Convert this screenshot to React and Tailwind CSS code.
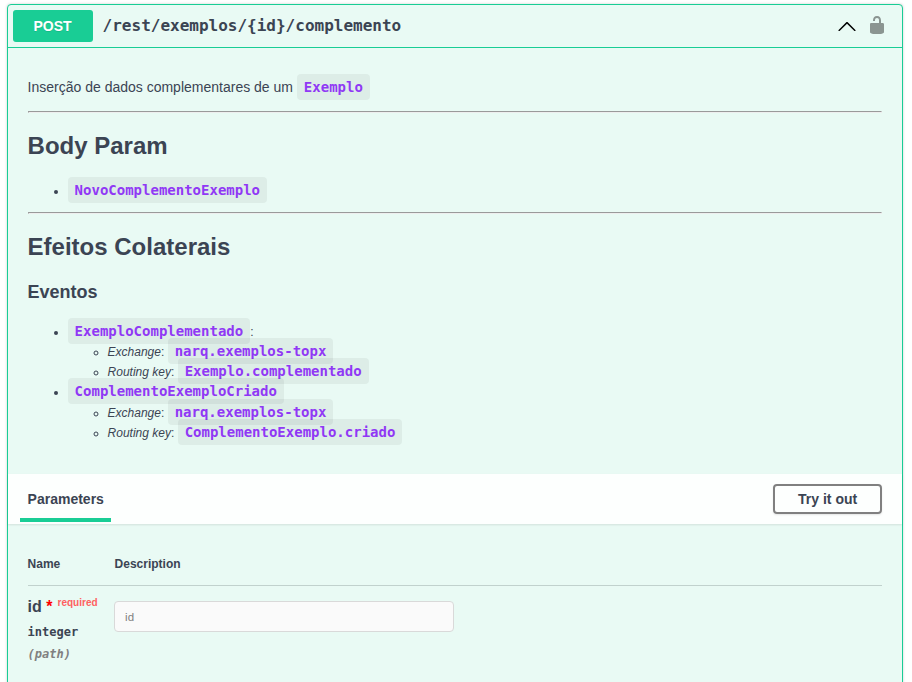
import React from "react";

const Code = ({ children }) => (
  <code className="rounded bg-black/5 px-[7px] py-[5px] font-['DejaVu_Sans_Mono',monospace] text-[14px] leading-none font-bold text-[#9038f5]">
    {children}
  </code>
);

const Rule = () => (
  <hr className="h-[2px] border border-t-[#9a9a9a] border-r-[#eee] border-b-[#eee] border-l-[#9a9a9a]" />
);

const Binding = ({ label, value }) => (
  <li>
    <div className="h-5 whitespace-nowrap">
      <em>{label}</em>: <Code>{value}</Code>
    </div>
  </li>
);

function Summary() {
  return (
    <div className="flex h-[43px] items-center border-b border-[#19cd95] px-[5px]">
      <button className="h-8 w-20 rounded-[3px] bg-[#19cd95] text-[14px] font-bold text-white [text-shadow:0_1px_0_rgba(0,0,0,0.1)]">
        POST
      </button>
      <span className="flex-1 pl-[10px] font-['DejaVu_Sans_Mono',monospace] text-[16px] font-semibold">
        /rest/exemplos/&#123;id&#125;/complemento
      </span>
      <svg width="20" height="20" viewBox="0 0 20 20" className="mr-[10px]">
        <path
          fill="#000"
          d="M 17.418 14.908 C 17.69 15.176 18.127 15.176 18.397 14.908 C 18.667 14.64 18.668 14.207 18.397 13.939 L 10.489 6.109 C 10.219 5.841 9.782 5.841 9.51 6.109 L 1.602 13.939 C 1.332 14.207 1.332 14.64 1.602 14.908 C 1.873 15.176 2.311 15.176 2.581 14.908 L 10 7.767 L 17.418 14.908 Z"
        />
      </svg>
      <svg width="20" height="20" viewBox="0 0 20 20" className="mr-[10px] mb-[2px] opacity-40">
        <path
          fill="#000"
          d="M15.8 8H14V5.6C14 2.703 12.665 1 10 1 7.334 1 6 2.703 6 5.6V6h2v-.801C8 3.754 8.797 3 10 3c1.203 0 2 .754 2 2.199V8H4c-.553 0-1 .646-1 1.199V17c0 .549.428 1.139.951 1.307l1.197.387C5.672 18.861 6.55 19 7.1 19h5.8c.549 0 1.428-.139 1.951-.307l1.196-.387c.524-.167.953-.757.953-1.306V9.199C17 8.646 16.352 8 15.8 8z"
        />
      </svg>
    </div>
  );
}

function Description() {
  return (
    <div className="h-[426px] px-5 pt-[29px]">
      <p className="h-[34px] text-[14px] leading-5">
        Inserção de dados complementares de um <Code>Exemplo</Code>
      </p>
      <Rule />
      <h1 className="mt-[17px] text-[24px] leading-8 font-bold">Body Param</h1>
      <ul className="mt-[19px] h-[31px] list-disc pl-10 text-[12px] leading-5">
        <li>
          <div className="h-5">
            <Code>NovoComplementoExemplo</Code>
          </div>
        </li>
      </ul>
      <Rule />
      <h1 className="mt-[17px] text-[24px] leading-8 font-bold">Efeitos Colaterais</h1>
      <h2 className="mt-[17px] text-[18px] leading-6 font-bold">Eventos</h2>
      <ul className="mt-[18px] list-disc pl-10 text-[12px] leading-5">
        <li>
          <div className="h-5">
            <Code>ExemploComplementado</Code>:
          </div>
          <ul className="list-[circle] pl-10">
            <Binding label="Exchange" value="narq.exemplos-topx" />
            <Binding label="Routing key" value="Exemplo.complementado" />
          </ul>
        </li>
        <li>
          <div className="h-[21px]">
            <Code>ComplementoExemploCriado</Code>
          </div>
          <ul className="list-[circle] pl-10">
            <Binding label="Exchange" value="narq.exemplos-topx" />
            <Binding label="Routing key" value="ComplementoExemplo.criado" />
          </ul>
        </li>
      </ul>
    </div>
  );
}

function ParametersBar() {
  return (
    <div className="flex h-[50px] items-center justify-between bg-white/90 pr-5 pl-3 shadow-[0_1px_2px_rgba(0,0,0,0.1)]">
      <div className="flex h-full flex-col justify-between pb-[2px]">
        <h4 className="pr-[7.4px] pl-2 pt-[15px] text-[14px] leading-5 font-bold">Parameters</h4>
        <div className="h-1 bg-[#19cd95]" />
      </div>
      <button className="h-[30px] w-[109px] rounded border-2 border-[#808080] pl-px text-[14px] font-bold shadow-[0_1px_2px_rgba(0,0,0,0.1)]">
        Try it out
      </button>
    </div>
  );
}

function ParametersTable() {
  return (
    <div className="px-5 pt-[20px]">
      <div className="flex h-[42px] border-b border-[#c1d1cd] pt-[10px] text-[12px] leading-5 font-bold">
        <div className="w-[87px]">Name</div>
        <div>Description</div>
      </div>
      <div className="flex pt-[10px]">
        <div className="w-[86px] shrink-0 whitespace-nowrap">
          <div className="flex h-[25px] text-[16px] leading-[22px] font-bold">
            <span>id</span>
            <span className="ml-[4.5px] text-[#ff0000]">*</span>
            <span className="ml-[5px] text-[10px] leading-[14px] text-[#ff6060]">required</span>
          </div>
          <div className="h-[22px] font-['DejaVu_Sans_Mono',monospace] text-[12px] leading-[22px] font-bold">
            integer
          </div>
          <div className="h-[22px] font-['DejaVu_Sans_Mono',monospace] text-[12px] leading-[22px] font-bold text-[#808080] italic">
            (path)
          </div>
        </div>
        <input
          placeholder="id"
          className="mt-[5px] h-[31px] w-[340px] rounded border border-[#d9d9d9] bg-[#fafafa] px-[10.5px] text-[11.5px] placeholder:text-[#808080]"
        />
      </div>
    </div>
  );
}

export default function App() {
  return (
    <div className="h-[682px] overflow-hidden bg-white pt-1 pr-[9.4px] pl-[6.6px] font-['Liberation_Sans',Arial,sans-serif] text-[#3b4453]">
      <div className="h-[720px] rounded border border-[#19cd95] bg-[#e9faf4] shadow-[0_0_3px_rgba(0,0,0,0.19)]">
        <Summary />
        <Description />
        <ParametersBar />
        <ParametersTable />
      </div>
    </div>
  );
}
